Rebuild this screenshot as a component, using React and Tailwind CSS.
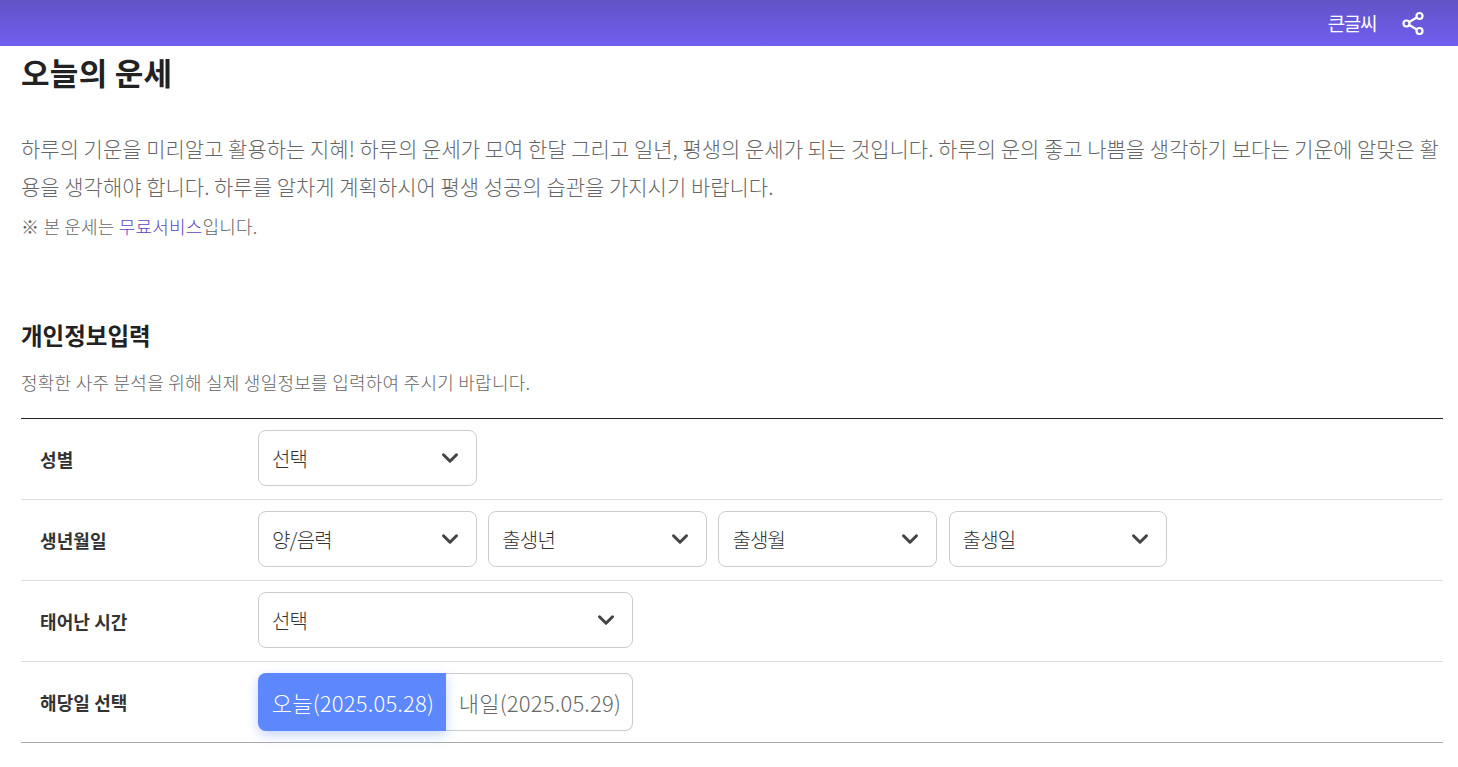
import { ChevronDown } from "lucide-react";

const font = { fontFamily: '"Noto Sans CJK KR", "Noto Sans", sans-serif' };

const Select = ({ label, width = "w-[218.8px]" }) => (
  <div className={`${width} h-14 shrink-0 flex items-center justify-between pl-[13px] pr-[13px] border border-[#cccccc] rounded-lg bg-white text-[20px] font-light tracking-[-0.8px] text-[#333333]`}>
    <span className="pt-[2px]">{label}</span>
    <ChevronDown size={26} strokeWidth={2.8} className="text-[#444444]" />
  </div>
);

const Row = ({ label, children, last }) => (
  <div className={`h-[81px] flex items-center border-b ${last ? "border-[#aaaaaa]" : "border-[#dddddd]"}`}>
    <div className="w-[237px] pl-[19px] text-[18px] font-bold tracking-[0.1px] text-[#333333]">{label}</div>
    <div className="h-full pt-[11px] flex items-start gap-[11.4px]">{children}</div>
  </div>
);

export default function App() {
  return (
    <div className="min-h-[767px] bg-white overflow-hidden" style={font}>
      <header className="h-[46px] bg-gradient-to-b from-[#6153c6] to-[#705ff0] flex items-center justify-end pr-[33px] text-white">
        <span className="text-[19px] tracking-[-1.4px] mr-[25px]">큰글씨</span>
        <svg width="24" height="24" viewBox="0 0 24 24" fill="none" stroke="currentColor" strokeWidth="2.2">
          <circle cx="18.5" cy="5" r="3" />
          <circle cx="5.5" cy="12.5" r="3" />
          <circle cx="18.5" cy="20" r="3" />
          <path d="M8.2 11 15.8 6.5M8.2 14 15.8 18.5" />
        </svg>
      </header>

      <main className="pl-[21px] pr-[15px]">
        <h1 className="text-[31px] leading-[52px] font-bold tracking-[0.3px] text-[#222222]">오늘의 운세</h1>

        <p className="mt-[31px] text-[21px] leading-[38px] font-light text-[#666666] break-all">
          하루의 기운을 미리알고 활용하는 지혜! 하루의 운세가 모여 한달 그리고 일년, 평생의 운세가 되는 것입니다. 하루의 운의 좋고 나쁨을 생각하기 보다는 기운에 알맞은 활용을 생각해야 합니다. 하루를 알차게 계획하시어 평생 성공의 습관을 가지시기 바랍니다.
        </p>
        <p className="mt-[4px] text-[18px] leading-[34px] font-light tracking-[0.2px] text-[#666666]">
          ※ 본 운세는 <span className="text-[#5a46c8]">무료서비스</span>입니다.
        </p>

        <h2 className="mt-[74px] text-[23.5px] leading-[36px] font-bold text-[#222222]">개인정보입력</h2>
        <p className="mt-[14px] text-[18px] leading-[30px] font-light tracking-[0.25px] text-[#666666]">
          정확한 사주 분석을 위해 실제 생일정보를 입력하여 주시기 바랍니다.
        </p>

        <section className="mt-[21px] border-t border-[#222222]">
          <Row label="성별">
            <Select label="선택" />
          </Row>
          <Row label="생년월일">
            <Select label="양/음력" />
            <Select label="출생년" />
            <Select label="출생월" />
            <Select label="출생일" />
          </Row>
          <Row label="태어난 시간">
            <Select label="선택" width="w-[375px]" />
          </Row>
          <Row label="해당일 선택" last>
            <div className="w-[375px] h-[58px] flex text-[22px] font-light tracking-[0.2px]">
              <div className="w-[188px] pl-[2px] flex items-center justify-center rounded-l-lg bg-[#5c87fd] text-white shadow-[0_4px_12px_rgba(92,135,253,0.35)] relative">
                오늘(2025.05.28)
              </div>
              <div className="flex-1 pl-[2px] flex items-center justify-center rounded-r-lg border border-l-0 border-[#cccccc] text-[#666666]">
                내일(2025.05.29)
              </div>
            </div>
          </Row>
        </section>
      </main>
    </div>
  );
}
